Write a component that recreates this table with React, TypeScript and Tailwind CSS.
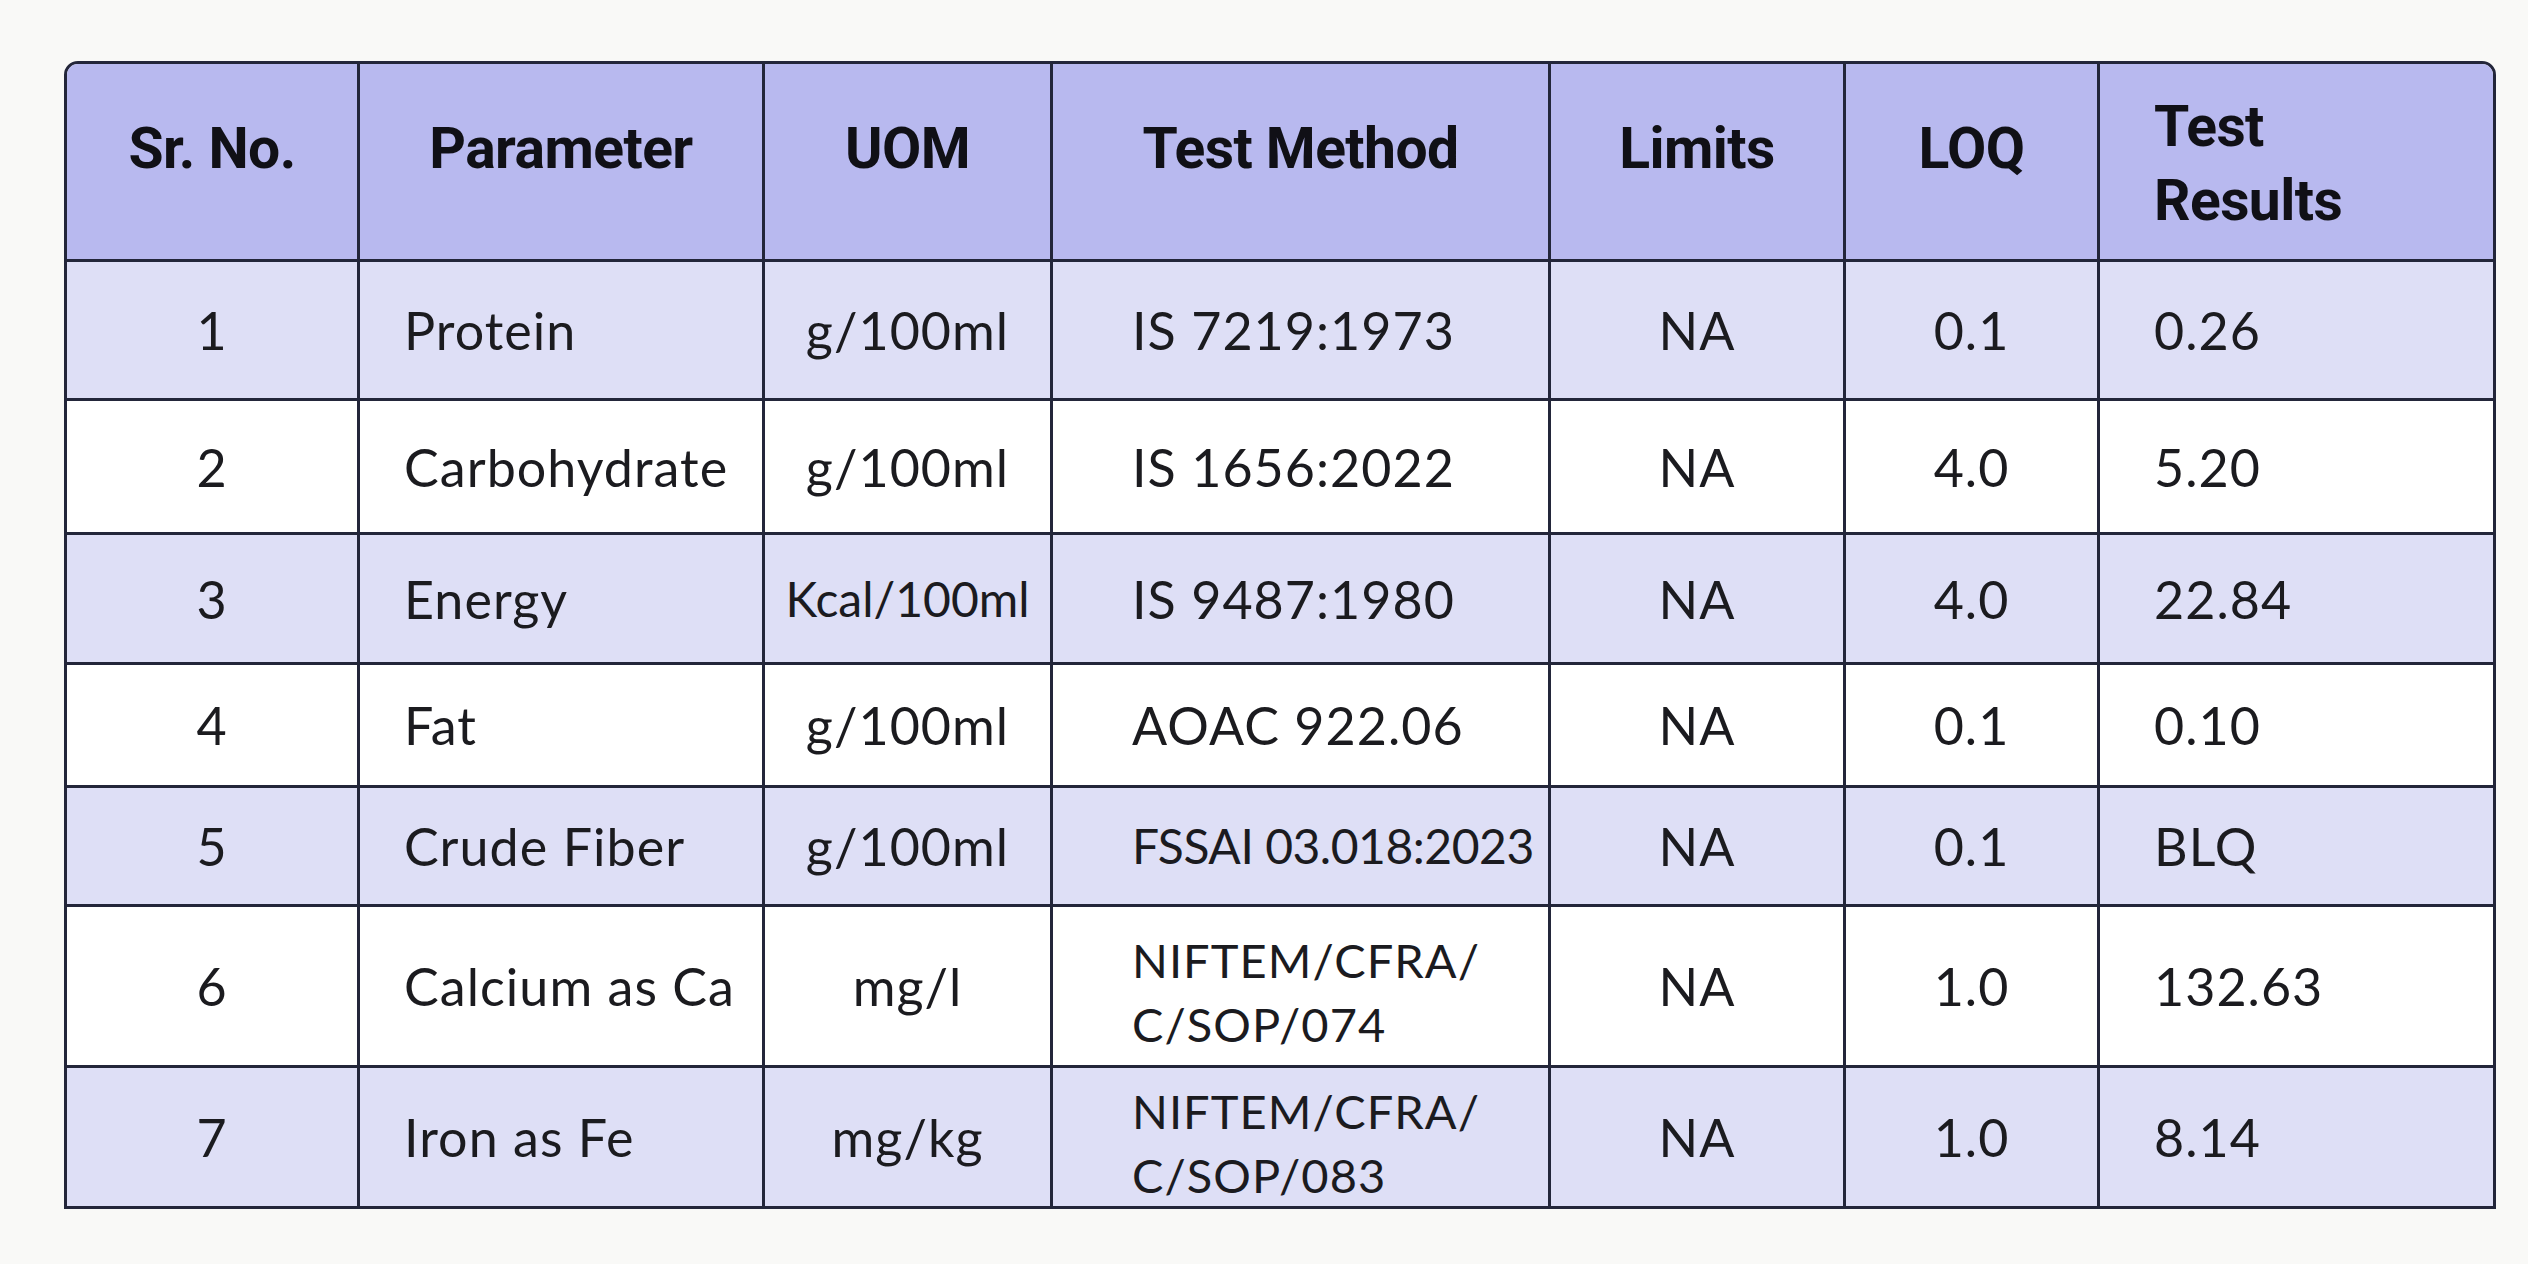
const rows = [
  { no: '1', param: 'Protein', uom: 'g/100ml', method: ['IS 7219:1973'], limits: 'NA', loq: '0.1', result: '0.26' },
  { no: '2', param: 'Carbohydrate', uom: 'g/100ml', method: ['IS 1656:2022'], limits: 'NA', loq: '4.0', result: '5.20' },
  { no: '3', param: 'Energy', uom: 'Kcal/100ml', method: ['IS 9487:1980'], limits: 'NA', loq: '4.0', result: '22.84' },
  { no: '4', param: 'Fat', uom: 'g/100ml', method: ['AOAC 922.06'], limits: 'NA', loq: '0.1', result: '0.10' },
  { no: '5', param: 'Crude Fiber', uom: 'g/100ml', method: ['FSSAI 03.018:2023'], limits: 'NA', loq: '0.1', result: 'BLQ' },
  { no: '6', param: 'Calcium as Ca', uom: 'mg/l', method: ['NIFTEM/CFRA/', 'C/SOP/074'], limits: 'NA', loq: '1.0', result: '132.63' },
  { no: '7', param: 'Iron as Fe', uom: 'mg/kg', method: ['NIFTEM/CFRA/', 'C/SOP/083'], limits: 'NA', loq: '1.0', result: '8.14' },
]

const head = "flex items-center justify-center pb-[26px] border-r-[3px] border-b-[3px] border-[#23263a] bg-[#b8b9ef] font-['Roboto',sans-serif] font-bold text-[57px] text-[#101016] tracking-[-0.01em]"

function App() {
  return (
    <div className="min-h-screen bg-[#f9f9f7] pt-[61px] pl-[64px]">
      <div className="w-[2432px] grid grid-cols-[293px_405px_288px_498px_295px_254px_393px] grid-rows-[198px_139px_134px_130px_123px_119px_161px_138px] border-[3px] border-[#23263a] rounded-t-[14px] overflow-hidden font-['Lato',sans-serif] text-[52px] text-[#1b1b1f] tracking-[0.02em]">
        {/* Header */}
        <div className={head}>Sr. No.</div>
        <div className={head}>Parameter</div>
        <div className={head}>UOM</div>
        <div className={head}>Test Method</div>
        <div className={head}>Limits</div>
        <div className={head}>LOQ</div>
        <div className="flex flex-col justify-center pl-[54px] pt-[4px] border-b-[3px] border-[#23263a] bg-[#b8b9ef] font-['Roboto',sans-serif] font-bold text-[57px] leading-[74px] text-[#101016] tracking-[-0.01em]">
          <span>Test</span>
          <span>Results</span>
        </div>

        {/* Body */}
        {rows.map((r, i) => {
          const bg = i % 2 === 0 ? 'bg-[#dedff6]' : 'bg-white'
          const bb = i === rows.length - 1 ? '' : 'border-b-[3px]'
          const cell = `flex items-center border-[#23263a] ${bg} ${bb}`
          return [
            <div key={`${i}-no`} className={`${cell} border-r-[3px] justify-center`}>{r.no}</div>,
            <div key={`${i}-p`} className={`${cell} border-r-[3px] pl-[44px] whitespace-nowrap`}>{r.param}</div>,
            <div key={`${i}-u`} className={`${cell} border-r-[3px] justify-center whitespace-nowrap`}>
              <span className={r.uom.startsWith('Kcal') ? 'text-[48px] tracking-normal' : ''}>{r.uom}</span>
            </div>,
            <div key={`${i}-m`} className={`${cell} border-r-[3px] pl-[79px]`}>
              {r.method.length > 1 ? (
                <div className="flex flex-col text-[47px] leading-[64px] pt-[12px]">
                  {r.method.map(m => <span key={m}>{m}</span>)}
                </div>
              ) : (
                <span className={r.method[0].startsWith('FSSAI') ? 'text-[48px] tracking-[-0.01em] whitespace-nowrap' : 'whitespace-nowrap'}>{r.method[0]}</span>
              )}
            </div>,
            <div key={`${i}-l`} className={`${cell} border-r-[3px] justify-center`}>{r.limits}</div>,
            <div key={`${i}-q`} className={`${cell} border-r-[3px] justify-center`}>{r.loq}</div>,
            <div key={`${i}-r`} className={`${cell} pl-[54px]`}>{r.result}</div>,
          ]
        })}
      </div>
    </div>
  )
}

export default App
